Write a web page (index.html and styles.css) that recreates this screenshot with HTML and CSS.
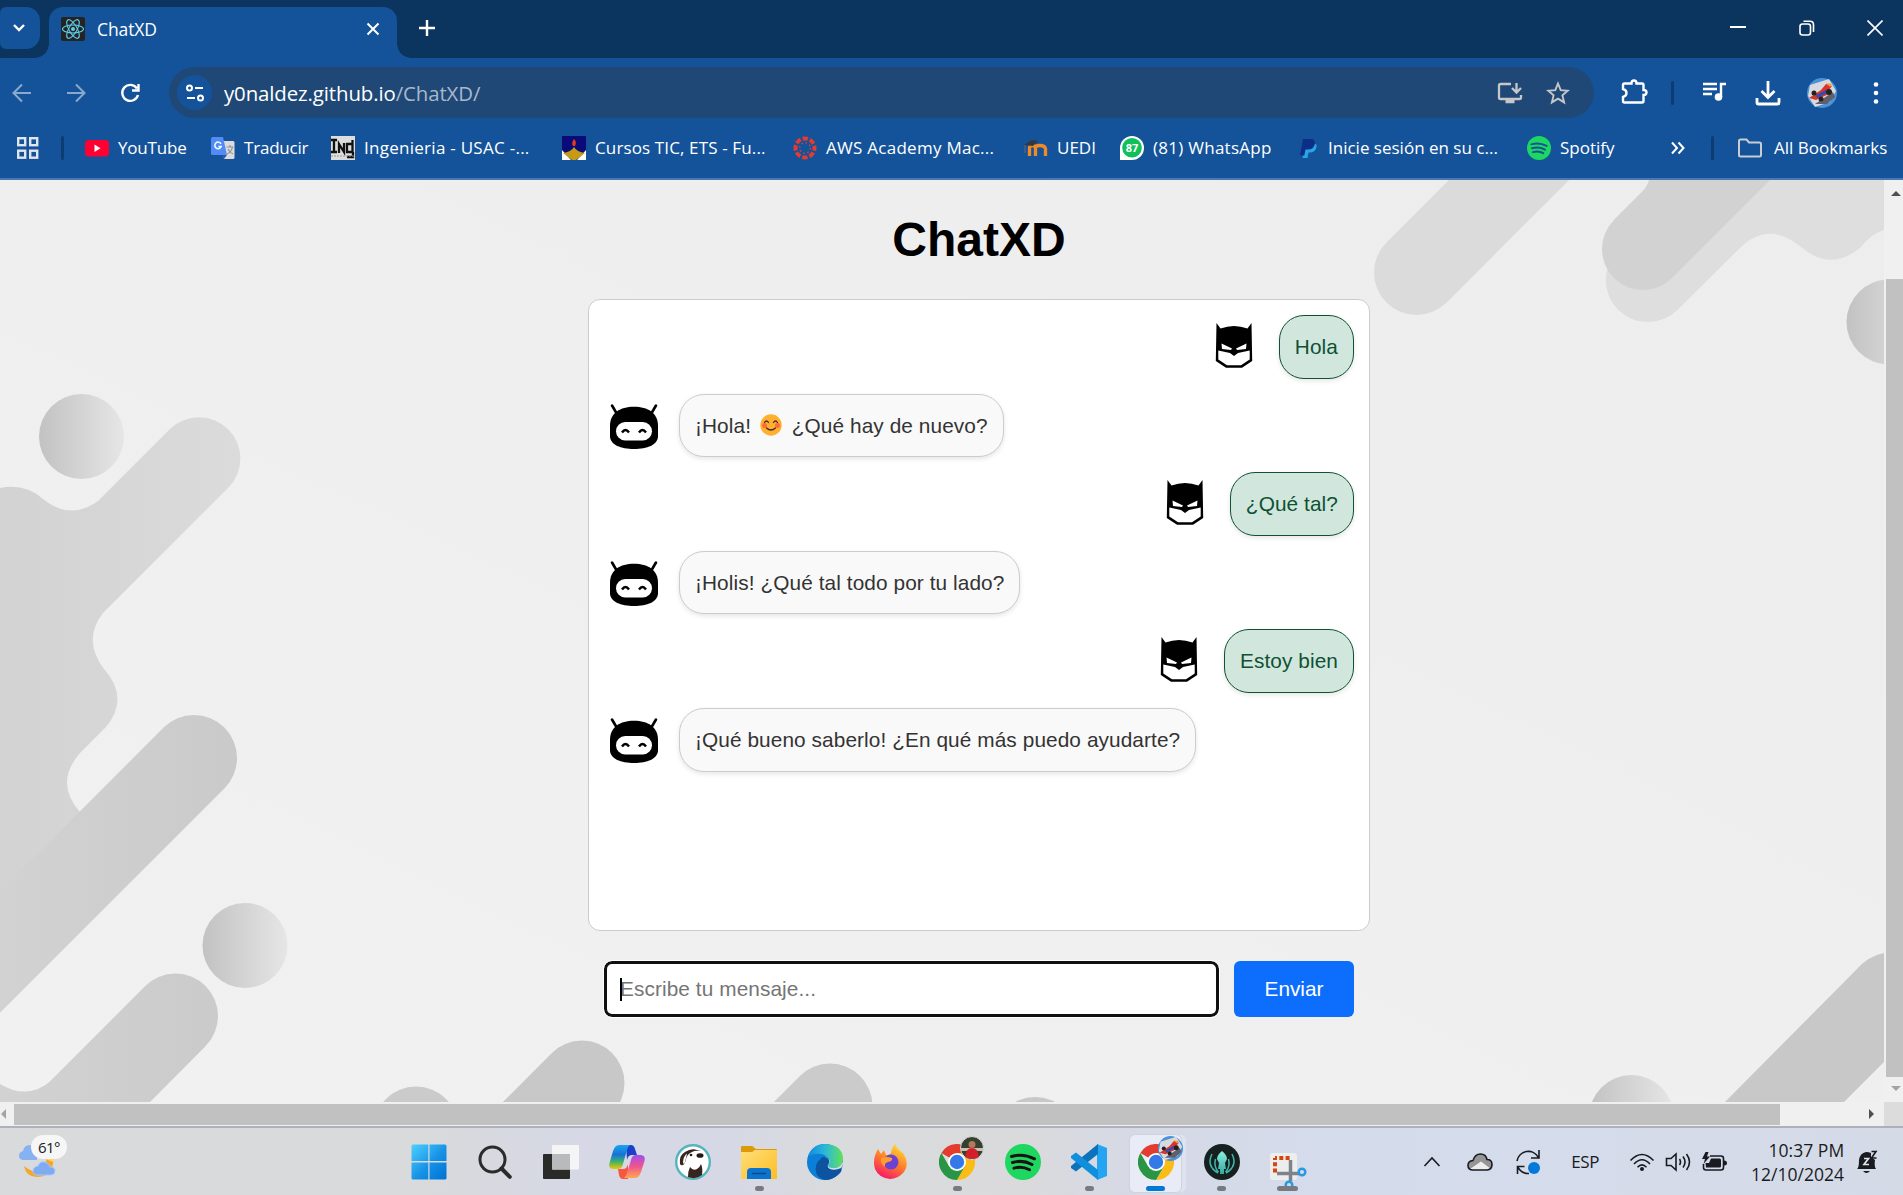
FILE: index.html
```html
<!DOCTYPE html>
<html lang="es">
<head>
<meta charset="utf-8">
<title>ChatXD</title>
<link rel="stylesheet" href="styles.css">
</head>
<body>
<svg class="defs" width="0" height="0">
  <defs>
    <linearGradient id="ball"><stop offset="0" stop-color="#c2c2c2"/><stop offset="1" stop-color="#e6e6e6"/></linearGradient>
    <linearGradient id="win" x2="1" y2="1"><stop offset="0" stop-color="#4fd0ff"/><stop offset=".55" stop-color="#1592e6"/><stop offset="1" stop-color="#0071d3"/></linearGradient>
    <linearGradient id="folder" x2="1" y2="1"><stop offset="0" stop-color="#ffdf7a"/><stop offset="1" stop-color="#fdbd22"/></linearGradient>
    <linearGradient id="co1" x2="0" y2="1"><stop offset="0" stop-color="#18a5f2"/><stop offset=".4" stop-color="#1673d5"/><stop offset=".7" stop-color="#3fb36c"/><stop offset="1" stop-color="#f3c400"/></linearGradient>
    <linearGradient id="co2" x2="0" y2="1"><stop offset="0" stop-color="#a24df0"/><stop offset=".5" stop-color="#f0558c"/><stop offset="1" stop-color="#ffa651"/></linearGradient>
    <linearGradient id="ed1"><stop offset="0" stop-color="#118be0"/><stop offset=".5" stop-color="#2bb9d8"/><stop offset="1" stop-color="#62e05a"/></linearGradient>
    <linearGradient id="ff" x1=".8" x2=".3" y2="1"><stop offset="0" stop-color="#ffe23c"/><stop offset=".5" stop-color="#ff8028"/><stop offset="1" stop-color="#f4156b"/></linearGradient>
    <linearGradient id="kr" x2="0" y2="1"><stop offset="0" stop-color="#8af0e0"/><stop offset="1" stop-color="#35a7a0"/></linearGradient>
    <symbol id="bot" viewBox="0 0 50 50">
      <path d="M3 3.5 8 12M47 3.5 42 12" stroke="#000" stroke-width="2.6" stroke-linecap="round"/>
      <path d="M25 4.800C39 4.800 49 11 49 24v10c0 9-11 13-24 13S1 43 1 34V24C1 11 11 4.800 25 4.800Z"/>
      <rect x="7" y="20" width="36" height="18.500" rx="9.200" fill="#fff"/>
      <path d="M13 30.500q3.500-5 7 0M30 30.500q3.500-5 7 0" fill="none" stroke="#000" stroke-width="2.400"/>
    </symbol>
    <symbol id="bat" viewBox="0 0 50 50">
      <path d="M7.500 1 11.500 6.500Q25 1.500 38.500 6.500L42.500 1l.7 38L33 45.800H17L6.800 39Z"/>
      <path d="M9.300 28.500 21 31 25 34 29 31 40.700 28.500V37.500L32 43.300H18L9.300 37.500Z" fill="#fff"/>
      <path d="M12.500 21.500 23 26.500 22 28 13 27ZM37.500 21.500 27 26.500 28 28 37 27Z" fill="#fff"/>
    </symbol>
    <symbol id="chrome" viewBox="0 0 36 36">
      <path d="M18 18 2.400 9A18 18 0 0 1 33.600 9H18Z" fill="#e33b2e"/>
      <path d="M18 9H33.600A18 18 0 0 1 18 36L25.800 22.500Z" fill="#fbbc16"/>
      <path d="M2.400 9 10.200 22.500 18 27 18 36A18 18 0 0 1 2.400 9Z" fill="#2a9645"/>
      <path d="M10.200 22.500 18 24 25.800 22.500 18 36Z" fill="#2a9645"/>
      <circle cx="18" cy="18" r="9" fill="#fff"/><circle cx="18" cy="18" r="7.200" fill="#3379e8"/>
    </symbol>
    <symbol id="car" viewBox="0 0 30 30">
      <circle cx="15" cy="15" r="15" fill="#4a93d8"/>
      <path d="M3 7 22 1 29 13 23 24 8 29 1 18Z" fill="#d9dadf"/>
      <path d="M8 26 26 14 28 19 20 26Z" fill="#625f6b"/>
      <path d="M2 20 14 12 19 6 25 8 22 12 24 15 9 22Z" fill="#d9352a"/>
      <path d="M9 17 19 12 20 15 10 20Z" fill="#2d4fb5"/><path d="M19 5 25 6 23 9Z" fill="#f0a23a"/>
      <circle cx="7" cy="15" r="2.500" fill="#222"/><circle cx="22" cy="14" r="3" fill="#222"/><circle cx="14" cy="21" r="2.500" fill="#222"/>
    </symbol>
    <symbol id="spot" viewBox="0 0 36 36">
      <circle cx="18" cy="18" r="18" fill="#1ed760"/>
      <path d="M6.500 12.500Q18 9 29.500 14.800M7.500 18.500Q18 15.500 27 20.500M9 24.200Q17 21.500 24.500 25.800" fill="none" stroke="currentColor" stroke-width="3" stroke-linecap="round"/>
    </symbol>
  </defs>
</svg>

<header class="chrome">
  <div class="tabstrip">
    <div class="tab-search"><svg width="14" height="10" viewBox="0 0 14 10"><path d="m2 2 5 5 5-5" class="ln w25"/></svg></div>
    <div class="tab">
      <svg width="24" height="24" viewBox="0 0 24 24"><rect width="24" height="24" rx="2" fill="#242424"/><g fill="none" stroke="#5fd0ea" stroke-width="1.100"><ellipse cx="12" cy="12" rx="10.500" ry="4"/><ellipse cx="12" cy="12" rx="10.500" ry="4" transform="rotate(60 12 12)"/><ellipse cx="12" cy="12" rx="10.500" ry="4" transform="rotate(120 12 12)"/></g><circle cx="12" cy="12" r="2" fill="#5fd0ea"/></svg>
      <span class="tab-title">ChatXD</span>
      <svg class="tab-close" width="14" height="14" viewBox="0 0 14 14"><path d="m1.500 1.500 11 11m0-11-11 11" class="ln w2"/></svg>
    </div>
    <svg class="new-tab" width="16" height="16" viewBox="0 0 16 16"><path d="M8 0v16M0 8h16" class="ln w25"/></svg>
    <div class="win-controls">
      <svg width="16" height="16" viewBox="0 0 16 16"><path d="M0 7h16" class="ln w2"/></svg>
      <svg width="16" height="16" viewBox="0 0 16 16"><rect x="1" y="4" width="10.500" height="11" rx="2.500" class="ln w15"/><path d="M4.500 1.200H11q3.500 0 3.500 3.500V12" class="ln w15"/></svg>
      <svg width="16" height="16" viewBox="0 0 16 16"><path d="m.5.5 15 15m0-15-15 15" class="ln w15"/></svg>
    </div>
  </div>

  <div class="toolbar">
    <svg class="nav dim" width="44" height="24" viewBox="0 0 44 24"><path d="M31 12H14m8-8.500L13.500 12l8.500 8.500" class="ln w2"/></svg>
    <svg class="nav dim" width="64" height="24" viewBox="0 0 64 24"><path d="M23 12h17m-8-8.500 8.500 8.500-8.500 8.500" class="ln w2"/></svg>
    <svg class="nav" width="44" height="24" viewBox="0 0 44 24"><path d="M29 7.500A8 8 0 1 0 30 14M30.500 3v6.500H24" class="ln w25"/></svg>
    <div class="omnibox">
      <span class="site"><svg width="20" height="20" viewBox="0 0 20 20"><g class="ln w2"><circle cx="4.500" cy="5" r="2.500"/><path d="M10 5h8M2 15h8"/><circle cx="15.500" cy="15" r="2.500"/></g></svg></span>
      <span class="url">y0naldez.github.io<i>/ChatXD/</i></span>
      <svg class="install" width="26" height="24" viewBox="0 0 26 24"><g fill="none" stroke="#c6c7c9" stroke-width="2.300"><path d="M14 3H3.500Q2 3 2 4.500v12Q2 18 3.500 18h19q1.500 0 1.500-1.500V14M19.500 2v9m-4.500-4 4.500 4.500L24 7"/><path d="M8.500 20.500h9" stroke-width="3.500"/></g></svg>
      <svg width="24" height="24" viewBox="0 0 24 24"><path d="m12 2.500 2.700 6.600 7.100.6-5.400 4.700 1.700 7-6.100-3.800-6.100 3.800 1.700-7-5.400-4.700 7.100-.6Z" fill="none" stroke="#c6c7c9" stroke-width="1.900"/></svg>
    </div>
    <svg class="ext" width="70" height="28" viewBox="0 0 70 28"><path d="M24.500 4.500H31.500Q31.500 1.500 34 1.500T36.500 4.500H42Q43.500 4.500 43.500 6V11Q46.500 11 46.500 13.500T43.500 16V22Q43.500 23.500 42 23.500H24.500Q23 23.500 23 22V18Q26.500 17 26.500 14T23 10V6Q23 4.500 24.500 4.500Z" class="ln w25"/></svg>
    <span class="sep"></span>
    <svg width="80" height="28" viewBox="0 0 80 28"><path d="M29 5h14M29 10h14M29 15h9M52 5h-5v13" class="ln w25"/><circle cx="44.500" cy="18" r="3.800" fill="#fff"/></svg>
    <svg width="28" height="28" viewBox="0 0 28 28"><path d="M14 2v16M7.500 12l6.500 6.500L20.500 12M3 19v4.500Q3 25 4.500 25h19q1.500 0 1.500-1.500V19" class="ln w28"/></svg>
    <svg width="80" height="30"><use href="#car" x="25" width="30" height="30"/></svg>
    <svg width="28" height="28" viewBox="0 0 28 28" fill="#fff"><circle cx="14" cy="5.500" r="2.300"/><circle cx="14" cy="14" r="2.300"/><circle cx="14" cy="22.500" r="2.300"/></svg>
  </div>

  <nav class="bookmarks">
    <span class="apps"><svg width="24" height="24" viewBox="0 0 24 24"><g fill="none" stroke="#dfe6ee" stroke-width="2.400"><rect x="2.200" y="2.200" width="7" height="7"/><rect x="14.200" y="2.200" width="7" height="7"/><rect x="2.200" y="14.700" width="7" height="7"/><rect x="14.200" y="14.700" width="7" height="7"/></g></svg><b class="sep"></b></span>
    <a><svg width="24" height="24" viewBox="0 0 24 24"><rect y="4" width="24" height="16.500" rx="4" fill="#f03"/><path d="m9.500 8.500 6 3.700-6 3.700Z" fill="#fff"/></svg><span>YouTube</span></a>
    <a class="near"><svg width="24" height="24" viewBox="0 0 24 24"><path d="M10 5h12q1.500 0 1.500 1.500v15q0 1.500-1.500 1.500h-9Z" fill="#dcdcdc"/><path d="M1.500 1H12l4 18H1.500Q0 19 0 17.500v-15Q0 1 1.500 1Z" fill="#4f8cf5"/><path d="m11 19h5l-3 4Z" fill="#3b4fb0"/><path d="M10 7.800A3.300 3.300 0 1 0 10.200 10.500H7.500" fill="none" stroke="#fff" stroke-width="1.500"/><path d="M15.500 11h7M19 9v2m2.500 0q-1 5-5.500 7m1-5q1.500 3.500 5 5" fill="none" stroke="#8b959c" stroke-width="1.200"/></svg><span>Traducir</span></a>
    <a><svg width="24" height="24" viewBox="0 0 24 24"><rect width="24" height="24" fill="#ddd"/><path d="M0 4h6M3 4v12M0 16h6M8 17V8l5 8V7M22 8h-6v8h5.500V4M22 16v5h-6" fill="none" stroke="#111" stroke-width="2.300"/><path d="M0 20h24" stroke="#999" stroke-dasharray="2 1"/></svg><span class="s3">Ingenieria - USAC -...</span></a>
    <a><svg width="24" height="24" viewBox="0 0 24 24"><rect width="24" height="24" fill="#0a0a78"/><path d="M0 14 9 24H0ZM24 14 15 24h9Z" fill="#fff"/><path d="M12 11Q15 16 23 17L14 24h-4L1 17Q9 16 12 11Z" fill="#c49a16"/><path d="M12 3q3 3 1 7h-2q-2-3 1-7Z" fill="#e83a22"/></svg><span class="s2">Cursos TIC, ETS - Fu...</span></a>
    <a><svg width="24" height="24" viewBox="0 0 24 24"><circle cx="12" cy="12" r="9.500" fill="none" stroke="#e23b32" stroke-width="4" stroke-dasharray="5.400 2.060" stroke-dashoffset="2.700"/><circle cx="12" cy="12" r="5.300" fill="none" stroke="#e23b32" stroke-width="1.500" stroke-dasharray="1.500 2.660"/></svg><span class="s3">AWS Academy Mac...</span></a>
    <a><svg width="24" height="24" viewBox="0 0 24 24"><path d="M5.500 20v-8q0-2.500 3-2.500t3 2.500v8m0-8q0-2.500 4.500-2.500t5.500 3V20" fill="none" stroke="#f08a24" stroke-width="3.300"/><path d="M0 9 8 4l6 1-5 5Z" fill="#33383f"/><path d="M1 9v8" stroke="#667"/></svg><span class="s1">UEDI</span></a>
    <a class="near"><svg width="24" height="24" viewBox="0 0 24 24"><path d="M0 24V12A12 12 0 1 1 12 24Z" fill="#fff"/><circle cx="12" cy="11.800" r="9.800" fill="#12c05b"/><text x="12" y="16" class="wa">87</text></svg><span class="s3">(81) WhatsApp</span></a>
    <a><svg width="21" height="24" viewBox="0 0 21 24"><path d="M7 8h8q4-1 3.500 3-1 5-6 5.500h-2l-1 5.500H4.500Z" fill="#29a5e4"/><path d="M5 3h7.500q5 0 4.300 5-1 5.500-7 5.500H7.500L6.300 19.500H2Z" fill="#0b2f86"/></svg><span class="s1">Inicie sesión en su c...</span></a>
    <a><svg class="bm-spot" width="24" height="24"><use href="#spot" width="24" height="24"/></svg><span class="s1">Spotify</span></a>
    <svg class="more" width="14" height="14" viewBox="0 0 14 14"><path d="m1 1.500 5 5.500-5 5.500m6.500-11 5 5.500-5 5.500" class="ln w2"/></svg>
    <b class="sep"></b>
    <a class="all"><svg width="24" height="20" viewBox="0 0 24 20"><path d="M1 3q0-1.500 1.500-1.500h6L11 4.500h10.500Q23 4.500 23 6v11q0 1.500-1.500 1.500h-19Q1 18.500 1 17Z" fill="none" stroke="#c9cdd2" stroke-width="2"/></svg><span class="s1">All Bookmarks</span></a>
  </nav>
</header>

<div class="viewport">
  <main class="page">
    <svg class="backdrop" width="1884" height="922" viewBox="0 180 1884 922">
      <defs>
        <linearGradient id="base" x1="1" y1="0" x2="0" y2="1"><stop offset="0" stop-color="#ededed"/><stop offset="1" stop-color="#f1f1f1"/></linearGradient>
        <linearGradient id="blob" gradientUnits="userSpaceOnUse" x1="0" y1="0" x2="240" y2="0"><stop offset="0" stop-color="#d2d2d2"/><stop offset="1" stop-color="#dbdbdb"/></linearGradient>
        <linearGradient id="bar" gradientUnits="userSpaceOnUse" x1="0" y1="0" x2="235" y2="0"><stop offset="0" stop-color="#d2d2d2"/><stop offset="1" stop-color="#cacaca"/></linearGradient>
      </defs>
      <rect y="180" width="1884" height="922" fill="url(#base)"/>
      <path d="M0 488Q25 483 43 499Q70 521 98 501L170 429A41 41 0 0 1 228 488L103 613Q82 640 104 669Q130 698 106 727L80 753Q54 783 80 812L0 900Z" fill="url(#blob)"/>
      <path d="M0 1084Q28 1101 52 1080L145.500 986 205.500 1046 150 1102H0Z" fill="url(#bar)"/>
      <path d="M1740 180 1618 250.300A42 42 0 0 0 1677.700 309.700L1742 246Q1770 221 1801 247Q1830 272 1860 248Q1872 233 1884 230V180Z" fill="#dedede"/>
      <path d="M1649 180Q1647 187 1642 192L1614 220 1680 220 1720 180Z" fill="#d2d2d2"/>
      <path d="M1725 1102 1856 970Q1868 956 1884 953V1062L1844 1102Z" fill="#c8c8c8"/>
      <g fill="none" stroke-width="85" stroke-linecap="round">
        <path d="M194 758-60 1012" stroke="url(#bar)" stroke-width="86"/>
        <path d="M175.500 1016 60 1131.500" stroke="url(#bar)"/>
        <path d="M582 1083 480 1185" stroke="#c8c8c8"/>
        <path d="M830 1106 740 1196" stroke="#cbcbcb"/>
        <path d="M1416.500 272.500 1550 139" stroke="#dbdbdb"/>
        <path d="M1643 249 1790 102" stroke="#d2d2d2" stroke-width="82"/>
      </g>
      <g fill="url(#ball)">
        <circle cx="81.500" cy="436.500" r="42.500"/><circle cx="245" cy="945.500" r="42.500"/><circle cx="416" cy="1129" r="42.500" fill="#cbcbcb"/><circle cx="1035" cy="1139.500" r="42.500" fill="#c8c8c8"/><circle cx="1631.500" cy="1117.500" r="42.500"/><circle cx="1889" cy="322" r="42.500"/>
      </g>
    </svg>
    <section class="app">
      <h1>ChatXD</h1>
      <div class="chat">
        <div class="row user"><svg width="50" height="50"><use href="#bat"/></svg><p>Hola</p></div>
        <div class="row"><svg width="50" height="50"><use href="#bot"/></svg><p>¡Hola! <svg class="smile" width="22" height="22" viewBox="0 0 22 22" role="img" aria-label="😊"><circle cx="11" cy="11" r="10.700" fill="#ffb02e"/><circle cx="4.500" cy="11.500" r="2.500" fill="#ff6a3a"/><circle cx="17.500" cy="11.500" r="2.500" fill="#ff6a3a"/><path d="M4.500 8.500q2-3 4 0m5 0q2-3 4 0M6.500 14q4.500 4 9 0" fill="none" stroke="#4a2b2b" stroke-width="1.300" stroke-linecap="round"/></svg> ¿Qué hay de nuevo?</p></div>
        <div class="row user"><svg width="50" height="50"><use href="#bat"/></svg><p>¿Qué tal?</p></div>
        <div class="row"><svg width="50" height="50"><use href="#bot"/></svg><p>¡Holis! ¿Qué tal todo por tu lado?</p></div>
        <div class="row user"><svg width="50" height="50"><use href="#bat"/></svg><p>Estoy bien</p></div>
        <div class="row"><svg width="50" height="50"><use href="#bot"/></svg><p>¡Qué bueno saberlo! ¿En qué más puedo ayudarte?</p></div>
      </div>
      <form class="composer">
        <div class="field"><input type="text" placeholder="Escribe tu mensaje..."><span class="caret"></span></div>
        <button type="button">Enviar</button>
      </form>
    </section>
  </main>
  <div class="vscroll"><i class="up"></i><b></b><i class="down"></i></div>
  <div class="hscroll"><i class="left"></i><b></b><i class="right"></i></div>
  <div class="corner"></div>
</div>

<footer class="taskbar">
  <div class="weather"><svg width="40" height="36" viewBox="0 0 40 36"><path d="M21 6q10 8 4 18T5 23q2 11 13 11t15-9-5-19Z" fill="#f5a62c"/><path d="M27 4q9 6 8 15l-9-3Z" fill="#ffd774"/><path d="M5 17q-5 0-5-4t4-5q1-6 7-6t7 6v9Z" fill="#86b2f4"/><path d="M19 32q-5 0-5-4t5-5q2-5 7-4 4 1 5 5 5 0 5 4t-4 4Z" fill="#7fabf3" stroke="#a5c8ff"/></svg><span class="temp">61°</span></div>
  <div class="task"><svg width="36" height="36" viewBox="0 0 36 36" fill="url(#win)"><path d="M.5 2q0-1.500 1.500-1.500h15.300V17H.5ZM18.500.5H34q1.500 0 1.500 1.500v15h-17ZM.5 18.500h16.800v17H2q-1.500 0-1.500-1.500ZM18.500 18.500h17V34q0 1.500-1.500 1.500H18.500Z"/></svg></div>
  <div class="task"><svg width="36" height="36" viewBox="0 0 36 36" fill="none" stroke="#2b2b2b"><circle cx="15.500" cy="15.500" r="12.500" stroke-width="3"/><path d="m24.500 24.500 8.300 8.300" stroke-width="4" stroke-linecap="round"/></svg></div>
  <div class="task"><svg width="36" height="36" viewBox="0 0 36 36"><rect y="10" width="27" height="25" rx="1" fill="#2a2a29"/><rect x="9" y="1" width="27" height="24.500" rx="1" fill="#f5f5f6"/><path d="M9 10h18v15.500H9Z" fill="#b9babb"/></svg></div>
  <div class="task"><svg width="36" height="36" viewBox="0 0 36 36"><path d="M17 1h5q3 0 4 4l2 6h-5q-4 0-5 5Z" fill="#1b3fc9"/><path d="M19 35h-5q-3 0-4-4l-1-6h5q4 0 5-5Z" fill="#f5583f"/><path d="M10 1h11q-2 1-3 5l-4 14q-1 5-5 5H5q-6 0-4.500-6L4 7q2-6 6-6Z" fill="url(#co1)"/><path d="M26 34H15q2-1 3-5l4-13q1-5 5-5h4q6 0 4.500 6L32 28q-2 6-6 6Z" fill="url(#co2)"/></svg></div>
  <div class="task"><svg width="36" height="36" viewBox="0 0 36 36"><circle cx="18" cy="18" r="16.800" fill="#fff" stroke="#55b5bb" stroke-width="2.400"/><path d="M5 20Q4 11 10 8q6-4 12-2l4 1q-6-1-9 1-5 2-6 7-1 5-3 6-2 1-3-1Z" fill="#38251f"/><path d="M8 19.500q0-7 4-10-1 5-2.500 10Z" fill="#fff"/><path d="M13 33q0-6 2-10 3 4 7 2 3-2 4-5 2 4 1 11-6 5-14 2Z" fill="#38251f"/><ellipse cx="25" cy="11.500" rx="3.500" ry="2.300" fill="#241914"/><circle cx="16" cy="11" r="1.300" fill="#241914"/></svg></div>
  <div class="task run"><svg width="36" height="36" viewBox="0 0 36 36"><path d="M0 3q0-1 1-1h10q1 0 2 1.500L15 5h20q1 0 1 1v5H0Z" fill="#dc9a09"/><path d="M0 8h11l3-2h22v28q0 1-1 1H1q-1 0-1-1Z" fill="url(#folder)"/><path d="M6 35v-7q0-4 4-4h16q4 0 4 4v7Z" fill="#0c74cf"/><path d="M11 29.500h14" stroke="#07488e" stroke-width="1.500"/></svg></div>
  <div class="task"><svg width="36" height="36" viewBox="0 0 36 36"><circle cx="18" cy="18" r="18" fill="#0c7fd9"/><path d="M1 13Q5 0 18 0q18 1 18 15 0 9-9 9-6 0-6-3 3-3 1-6-5-6-13-5Q4 10 1 13Z" fill="url(#ed1)"/><path d="M14 19q-2-7 4-6 5 1 4 6-3 4 1 6 5 2 11-1 2 3-3 7-6 5-13 5Q7 33 9 22q1-5 5-7Z" fill="#0c549f"/><path d="M18 13q5 1 4 6-3 4 1 6 5 2 11-1 3-4 2-6-3 6-9 6-6 0-6-3 3-3 1-6Z" fill="#d9dadf"/></svg></div>
  <div class="task"><svg width="36" height="36" viewBox="0 0 36 36"><path d="M22 0q3 6 8 9 7 11 1 19-6 7-14 7Q6 34 2 25-1 15 5 5l3 5 3-4 2 5q4 0 5-2 1-6 4-9Z" fill="url(#ff)"/><circle cx="18" cy="18" r="7.500" fill="#6b42d3"/><path d="M8 14q6-2 11 0 1 3-4 4-4 1-3 5-5-3-4-9Z" fill="#ff9d2b"/></svg></div>
  <div class="task run"><svg width="36" height="36"><use href="#chrome"/></svg><svg class="who" width="24" height="24" viewBox="0 0 24 24"><circle cx="12" cy="12" r="11.500" fill="#35402f" stroke="#ddd"/><path d="M1 12h22v3H1Z" fill="#c9c1b4"/><path d="M5 21q1-9 7-9t7 9q-7 4-14 0Z" fill="#d31f2a"/><circle cx="12" cy="8.500" r="3.500" fill="#b5785c"/></svg></div>
  <div class="task"><svg class="tb-spot" width="36" height="36"><use href="#spot"/></svg></div>
  <div class="task run"><svg width="36" height="36" viewBox="0 0 36 36"><path d="M26 0 36 4v28l-10 4Z" fill="#25a4f2"/><path d="M27 0v10L5 27.500 0 24v-2Z" fill="#0b72bb"/><path d="M27 36V26L5 8.500 0 12v2Z" fill="#108fdd"/></svg></div>
  <div class="task run active"><svg width="36" height="36"><use href="#chrome"/></svg><svg class="who" width="25" height="25"><use href="#car" width="25" height="25"/></svg></div>
  <div class="task run"><svg width="36" height="36" viewBox="0 0 36 36"><circle cx="18" cy="18" r="18" fill="#16201f"/><path d="M18 7q5 4 5 8l-2 4 1 6h-2v5h-4v-5h-2l1-6-2-4q0-4 5-8Z" fill="url(#kr)"/><path d="M8 10q-6 12 6 19M28 10q6 12-6 19M11.500 15q-2 8 3 13M24.500 15q2 8-3 13" fill="none" stroke="#3fb5ab" stroke-width="1.500"/></svg></div>
  <div class="task run wide"><svg width="36" height="36" viewBox="0 0 36 36" overflow="visible"><rect y="9" width="27" height="27" rx="3" fill="#eceded"/><path d="M5 14h15M5 14v17" fill="none" stroke="#d8440d" stroke-width="4" stroke-dasharray="4 2.300" stroke-dashoffset="2"/><path d="M20.500 16v21M7 29.500h22" stroke="#7d838a" stroke-width="3.500"/><circle cx="32" cy="28" r="3.300" fill="none" stroke="#2699e0" stroke-width="2.500"/><circle cx="19" cy="41" r="3.300" fill="none" stroke="#2699e0" stroke-width="2.500"/></svg></div>
  <div class="tray">
    <svg width="18" height="12" viewBox="0 0 18 12"><path d="m1.500 10 7.500-8 7.500 8" class="dk"/></svg>
    <svg width="26" height="20" viewBox="0 0 26 20"><path d="M6 18Q1 18 1 13.500T6 8.500Q8 2 13.500 2T20 7.500q5 0 5 5T20 18Z" fill="#969696"/><path d="M3 17 14 9.500 24 17q-2 1.500-4 1H6Z" fill="#eee"/><path d="M6 18Q1 18 1 13.500T6 8.500Q8 2 13.500 2T20 7.500q5 0 5 5T20 18Z" class="dk"/></svg>
    <svg width="26" height="26" viewBox="0 0 26 26"><path d="M2 12A11.500 11.500 0 0 1 23.500 8.500M24 1v8h-8M2.500 25v-7.500h7M3 18.500Q7 25 14 24.500" class="dk"/><circle cx="19" cy="19" r="6" fill="#0479d9"/></svg>
    <span class="lang">ESP</span>
    <svg width="26" height="20" viewBox="0 0 26 20"><path d="M1.500 8.500q11.500-12 23 0M5 12q8-8.500 16 0M8.500 15.200q4.500-4.700 9 0" class="dk"/><circle cx="13" cy="17" r="2" fill="#191b20"/></svg>
    <svg width="26" height="20" viewBox="0 0 26 20"><path d="M1.500 6.500H6L11 2v16L6 13.500H1.500ZM14.500 7q2 3 0 6M18 4.500q4 5.500 0 11M21.500 2q6 8 0 16" class="dk"/></svg>
    <svg width="26" height="22" viewBox="0 0 26 22"><path d="M9 5h11q2.500 0 2.500 2.500v9Q22.500 19 20 19H5q-2.500 0-2.500-2.500V13" class="dk"/><path d="M10 7.500h8.500q1.500 0 1.500 1.500v6q0 1.500-1.500 1.500H5L4.500 12H8ZM23 9.500q3 0 3 2.500t-3 2.500ZM4.500 1 1 8h3l-1.500 5L9 5.500H6L7.500 1Z" fill="#191b20"/></svg>
    <div class="clock">10:37 PM<br>12/10/2024</div>
    <svg width="22" height="24" viewBox="0 0 22 24"><path d="M1 19q2-1 2-9 1-7 7-8 3 0 5 1v4l4 3q-1 7 1 9ZM7 21h7q-3.500 4-7 0Z" fill="#191b20"/><path d="M8 8.500h4.500L8 14.500h5" fill="none" stroke="#dfe3ea" stroke-width="1.700"/><path d="M15.500 1.500H20L15.500 8h5" class="dk"/></svg>
  </div>
</footer>
</body>
</html>
```
FILE: styles.css
```css
* { box-sizing: border-box; }
body { margin: 0; width: 1903px; height: 1195px; overflow: hidden; font-family: "Liberation Sans", Arial, sans-serif; background: #efefef; }
svg { display: block; flex: none; }
.defs { position: absolute; }
.ln { fill: none; stroke: #fff; }
.w15 { stroke-width: 1.6; }
.w2 { stroke-width: 2; }
.w25 { stroke-width: 2.4; }
.w28 { stroke-width: 2.8; }
.dk { fill: none; stroke: #191b20; stroke-width: 1.6; }

/* Browser frame */
.chrome { height: 180px; background: #14539a; border-bottom: 2px solid #4879b3; color: #fff; font-family: "Open Sans", "Noto Sans", sans-serif; }
.tabstrip { height: 58px; background: #0b355f; display: flex; align-items: flex-start; }
.tab-search { width: 40px; height: 42px; margin-top: 7px; padding: 16px 0 0 12px; background: #14539a; border-radius: 6px 14px 14px 6px; }
.tab { position: relative; width: 348px; height: 51px; margin: 7px 0 0 9px; padding: 0 17px 8px 12px; display: flex; align-items: center; background: #14539a; border-radius: 14px 14px 0 0; }
.tab::before, .tab::after { content: ""; position: absolute; bottom: 0; width: 14px; height: 14px; }
.tab::before { left: -14px; background: radial-gradient(circle at 0 0, transparent 13.5px, #14539a 14px); }
.tab::after { right: -14px; background: radial-gradient(circle at 100% 0, transparent 13.5px, #14539a 14px); }
.tab-title { margin-left: 12px; padding-top: 1px; font-size: 17.5px; letter-spacing: -.1px; }
.tab-close { margin-left: auto; }
.new-tab { margin: 20px 0 0 22px; }
.win-controls { display: flex; gap: 52.5px; margin: 20px 20px 0 auto; }
.toolbar { height: 69px; display: flex; align-items: center; }
.dim { opacity: .5; }
.omnibox { width: 1425px; height: 51px; margin-left: 17px; padding: 0 24px 0 8px; display: flex; align-items: center; background: #1f4877; border-radius: 26px; }
.site { width: 35px; height: 35px; display: grid; place-items: center; background: #14539a; border-radius: 50%; }
.url { margin-left: 12px; font-size: 20.4px; letter-spacing: -.1px; }
.url i { font-style: normal; color: #a9b9cc; }
.install { margin: 0 23px 0 auto; }
.ext { margin-left: 6px; }
.sep { width: 3px; height: 24px; background: #0b3d73; border-radius: 2px; }
.toolbar .sep { margin: 0 0 0 1px; }
.bookmarks { height: 42px; display: grid; grid-template-columns: 85px 126px 120px 231px 231px 231px 96px 178px 229px 144px 40px 27px auto; align-items: center; font-size: 17px; letter-spacing: -.2px; }
.bookmarks a { display: flex; align-items: center; gap: 9px; white-space: nowrap; }
.bookmarks a span { padding-bottom: 2px; }
.bookmarks .near svg { margin-right: 0; }
.s1 { letter-spacing: 0; }
.s2 { letter-spacing: .13px; }
.s3 { letter-spacing: .27px; }
.apps { display: flex; align-items: center; gap: 21px; padding-left: 16px; }
.bookmarks .all { gap: 12px; }
.wa { fill: #fff; font-weight: 700; font-size: 11px; text-anchor: middle; letter-spacing: 0; }
.bm-spot { color: #14539a; }

/* Page area with its scrollbars */
.viewport { height: 948px; display: grid; grid-template: 922px 24px / 1884px 19px; border-bottom: 2px solid #adb1ba; background: #f0f0f0; }
.page { position: relative; overflow: hidden; }
.backdrop { position: absolute; inset: 0; }
.app { position: relative; width: 782px; margin-left: 588px; }
h1 { margin: 0; padding-top: 32px; height: 119px; text-align: center; font-size: 48px; line-height: 55px; }
.chat { height: 632px; padding: 15px; display: flex; flex-direction: column; gap: 15px; background: #fff; border: 1px solid #ccc; border-radius: 12px; }
.row { height: 63.6px; padding-left: 5px; display: flex; gap: 20px; }
.row > svg { margin-top: 8px; }
.row.user > svg { margin-top: 7px; }
.row p { margin: 0; height: 63.6px; padding: 0 15px; border: 1px solid #ccc; border-radius: 25px; background: #f9f9f9; color: #333; font-size: 20.8px; letter-spacing: .09px; line-height: 61px; white-space: nowrap; box-shadow: 0 2px 5px rgba(0,0,0,.1); }
.user { justify-content: flex-end; }
.row.user p { background: #d1e7dd; border-color: #0f5132; color: #0f5132; }
.smile { display: inline-block; vertical-align: -3px; margin: 0 3.5px; }
.composer { margin: 30px 16px 0 16px; height: 56px; display: flex; gap: 15px; }
.field { position: relative; flex: 1; }
input { width: 100%; height: 56px; padding: 0 13px; border: 3px solid #101010; border-radius: 8px; outline: 1px solid #fff; font: 20.8px "Liberation Sans", Arial, sans-serif; letter-spacing: .09px; }
input::placeholder { color: #757575; }
.caret { position: absolute; left: 16px; top: 17px; width: 1.5px; height: 23px; background: #000; }
button { width: 120px; border: 0; border-radius: 6px; background: #0d6efd; color: #fff; font: 20.8px "Liberation Sans", Arial, sans-serif; }
.vscroll { display: flex; flex-direction: column; padding-left: 2px; align-items: center; }
.vscroll b { width: 17px; height: 798px; margin-top: 83px; background: #c1c1c1; }
.vscroll i, .hscroll i { border: 5px solid transparent; }
.vscroll .up { margin-top: 6px; border-bottom-color: #505050; }
.vscroll .down { margin-top: 9px; border-top-color: #a3a3a3; }
.vscroll .up, .vscroll .down { margin-left: 2px; }
.hscroll { display: flex; align-items: center; }
.hscroll b { width: 1766px; height: 21px; background: #c1c1c1; }
.hscroll .left { margin: 0 8px 0 -4px; border-right-color: #a3a3a3; }
.hscroll .right { margin-left: 89px; border-left-color: #505050; }
.corner { background: #dcdcdc; }

/* Taskbar */
.taskbar { height: 67px; display: grid; grid-template-columns: 395.5px repeat(14, 66.05px) 1fr; background: linear-gradient(90deg, #d9dadb 0 22%, #d6d8e5 30%, #d6d8e6 38%, #dadbdc 44%, #dadadd 54%, #d6d9e6 60%, #d4dcec 72%, #d5dae7); color: #191b20; font-family: "Open Sans", "Noto Sans", sans-serif; }
.weather { position: relative; padding: 15px 0 0 19px; }
.temp { position: absolute; left: 31px; top: 7px; width: 36px; height: 24px; border-radius: 12px; background: #f6f6f6; text-align: center; font-size: 15px; line-height: 24px; letter-spacing: -.5px; }
.task { position: relative; padding: 15.5px 14px 0 15.5px; }
.run::after { content: ""; position: absolute; left: 29px; top: 58px; width: 9px; height: 5px; border-radius: 3px; background: #777a80; }
.wide::after { left: 23px; width: 21px; }
.active::before { content: ""; position: absolute; left: 7px; top: 6px; width: 51px; height: 57px; border-radius: 6px; background: #e9ecf6; border: 1px solid #cfd3df; box-shadow: 5px 0 0 -1px #dfe3ee; }
.active svg { position: relative; }
.active::after { left: 24px; width: 19px; background: #0078d4; }
.task .who { position: absolute; left: 36px; top: 8px; }
.tb-spot { color: #191414; }
.tray { margin-left: 88px; display: grid; grid-template-columns: 48px 48px 48px 72px 36px 36px 36px 112px 46px; align-items: center; justify-items: center; }
.lang { padding-right: 6px; font-size: 17px; letter-spacing: -.4px; }
.clock { justify-self: end; text-align: right; font-size: 17.5px; line-height: 24px; letter-spacing: .02px; white-space: nowrap; }
```
